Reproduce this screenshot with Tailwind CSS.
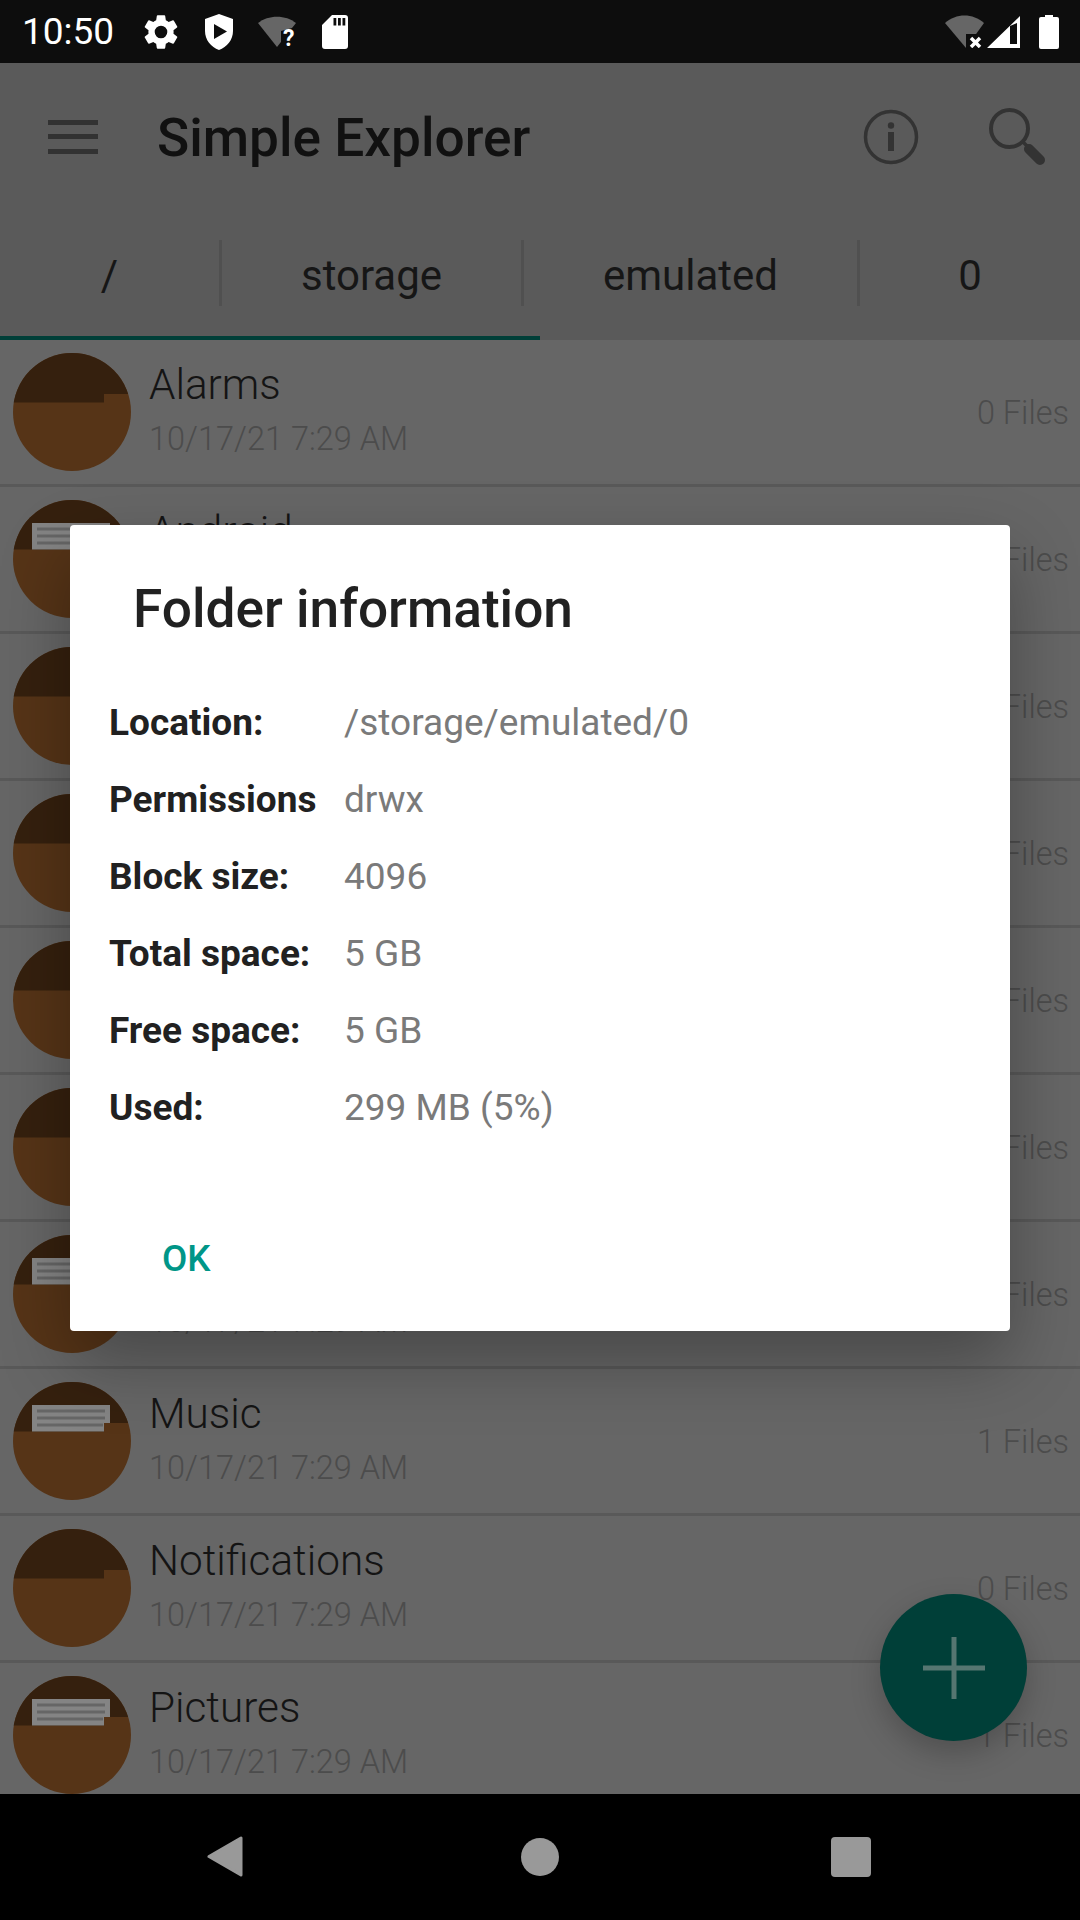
<!DOCTYPE html>
<html lang="en">
<head>
  <meta charset="UTF-8" />
  <meta name="viewport" content="width=device-width, initial-scale=1.0"/>
  <title>Simple Explorer</title>
  <script src="https://cdn.jsdelivr.net/npm/@tailwindcss/browser@4"></script>
</head>
<body class="font-['Roboto',sans-serif] bg-[#666666]">
<div class="relative w-[1080px] h-[1920px] overflow-hidden flex flex-col">

  <!-- status bar -->
  <div class="h-[63px] shrink-0 bg-[#0d0d0d] flex items-center pl-[22px] pr-[21px] text-white">
    <span class="text-[37px] leading-none w-[118px]">10:50</span>
    <svg width="42" height="42" viewBox="0 0 24 24" fill="#fff"><path d="M19.14 12.94c.04-.3.06-.61.06-.94s-.02-.64-.07-.94l2.03-1.58a.5.5 0 0 0 .12-.61l-1.92-3.32a.5.5 0 0 0-.59-.22l-2.39.96a7 7 0 0 0-1.62-.94l-.36-2.54a.48.48 0 0 0-.48-.41h-3.84a.48.48 0 0 0-.47.41l-.36 2.54c-.59.24-1.13.57-1.62.94l-2.39-.96a.49.49 0 0 0-.59.22L2.74 8.87a.48.48 0 0 0 .12.61l2.03 1.58c-.05.3-.09.63-.09.94s.02.64.07.94l-2.03 1.58a.5.5 0 0 0-.12.61l1.92 3.32c.12.22.37.29.59.22l2.39-.96c.5.38 1.03.7 1.62.94l.36 2.54c.05.24.24.41.48.41h3.84c.24 0 .44-.17.47-.41l.36-2.54c.59-.24 1.13-.56 1.62-.94l2.39.96c.22.08.47 0 .59-.22l1.92-3.32a.48.48 0 0 0-.12-.61zM12 15.6a3.6 3.6 0 1 1 0-7.2 3.6 3.6 0 0 1 0 7.2z"/></svg>
    <svg class="ml-[22px]" width="30" height="36" viewBox="0 0 30 36" fill="#fff"><path fill-rule="evenodd" d="M15 0 L29 5 V17 C29 26 23 33 15 36 C7 33 1 26 1 17 V5 Z M10 10 V25 L23 17.500 Z"/></svg>
    <svg class="ml-[24px]" width="38" height="31" viewBox="0 0 38 31"><path d="M0 7 C10 -1.500 28 -1.500 38 7 L19 31 Z" fill="#666"/><path d="M23 31 V15 L38 11 V31 Z" fill="#0d0d0d"/><text x="25" y="30" font-size="23" font-weight="700" fill="#fff" font-family="Roboto">?</text></svg>
    <svg class="ml-[26px]" width="26" height="34" viewBox="0 0 26 34" fill="#fff"><path fill-rule="evenodd" d="M10 0 H23 a3 3 0 0 1 3 3 V31 a3 3 0 0 1-3 3 H3 a3 3 0 0 1-3-3 V10 Z M11.500 3 V10.500 H14.300 V3 Z M16 3 V10.500 H18.800 V3 Z M20.500 3 V10.500 H23.300 V3 Z"/></svg>
    <svg class="ml-auto" width="39" height="33" viewBox="0 0 39 33"><path d="M0 8 C11 -2 28 -2 39 8 L21 33 Z" fill="#666"/><path d="M21 19 H39 V33 H21 Z" fill="#0d0d0d"/><path d="M26 23 L35 32 M35 23 L26 32" stroke="#fff" stroke-width="3.500"/></svg>
    <svg class="ml-[3px]" width="33" height="32" viewBox="0 0 33 32"><path fill-rule="evenodd" d="M0 32 L33 0 V32 Z M23 10 V28 H30 V7 Z" fill="#fff"/></svg>
    <svg class="ml-[19px]" width="20" height="34" viewBox="0 0 20 34" fill="#fff"><path d="M6 0 H14 V2 H18 a2 2 0 0 1 2 2 V32 a2 2 0 0 1-2 2 H2 a2 2 0 0 1-2-2 V4 a2 2 0 0 1 2-2 H6 Z"/></svg>
  </div>

  <!-- app bar -->
  <div class="h-[147px] shrink-0 bg-[#5a5a5a] flex items-center">
    <div class="ml-[48px] w-[50px] flex flex-col gap-[9.500px]">
      <div class="h-[5px] bg-[#323232]"></div>
      <div class="h-[5px] bg-[#323232]"></div>
      <div class="h-[5px] bg-[#323232]"></div>
    </div>
    <h1 class="ml-[59px] mt-[5px] text-[53.200px] leading-none font-medium text-[#111111]">Simple Explorer</h1>
    <svg class="ml-auto" width="56" height="56" viewBox="0 0 56 56"><circle cx="28" cy="28" r="25.500" fill="none" stroke="#333" stroke-width="3.500"/><circle cx="28" cy="16.500" r="3.200" fill="#333"/><rect x="25" y="23" width="6" height="19" fill="#333"/></svg>
    <svg class="ml-[70.500px] mr-[34px]" width="57" height="58" viewBox="0 0 57 58"><circle cx="20.500" cy="20.500" r="18.500" fill="none" stroke="#333" stroke-width="4"/><path d="M34 34 L39 39" stroke="#333" stroke-width="3.500"/><path d="M40 41 L51 52" stroke="#333" stroke-width="10" stroke-linecap="round"/></svg>
  </div>

  <!-- breadcrumb tabs -->
  <div class="relative h-[130px] shrink-0 bg-[#5a5a5a]">
    <div class="h-[126px] flex items-center text-[42px] leading-none text-[#161616]">
      <div class="w-[219px] pt-[5px] text-center">/</div>
      <div class="w-[3px] h-[66px] bg-[#505050]"></div>
      <div class="w-[299px] pt-[5px] text-center">storage</div>
      <div class="w-[3px] h-[66px] bg-[#505050]"></div>
      <div class="w-[333px] pt-[5px] text-center">emulated</div>
      <div class="w-[3px] h-[66px] bg-[#505050]"></div>
      <div class="flex-1 pt-[5px] text-center">0</div>
    </div>
    <div class="absolute left-0 bottom-0 w-[540px] h-[4px] bg-[#003f38]"></div>
  </div>

  <!-- list -->
  <div class="flex-1 bg-[#666666] overflow-hidden">
    <div class="h-[147px] flex items-center border-b-[3px] border-[#595959] pl-[13px] pr-[11px]">
      <svg width="118" height="118" viewBox="0 0 118 118"><defs><clipPath id="c1"><circle cx="59" cy="59" r="59"/></clipPath></defs><g clip-path="url(#c1)"><rect width="118" height="118" fill="#563417"/><path d="M0 0 H118 V41 H91 V49.500 H0 Z" fill="#35200e"/></g></svg>
      <div class="ml-[18px] pb-[6px] flex-1"><div class="text-[42.300px] leading-[46px] font-light text-[#141414]">Alarms</div><div class="text-[32.500px] leading-[36px] mt-[13px] font-light text-[#4c4c4c]">10/17/21 7:29 AM</div></div>
      <div class="pt-[2px] text-[32.500px] font-light text-[#4c4c4c]">0 Files</div>
    </div>
    <div class="h-[147px] flex items-center border-b-[3px] border-[#595959] pl-[13px] pr-[11px]">
      <svg width="118" height="118" viewBox="0 0 118 118"><defs><clipPath id="c2"><circle cx="59" cy="59" r="59"/></clipPath></defs><g clip-path="url(#c2)"><rect width="118" height="118" fill="#563417"/><path d="M0 0 H118 V41 H91 V49.500 H0 Z" fill="#35200e"/><path d="M19 23 H97 V41 H91 V49.500 H19 Z" fill="#848484"/><path d="M24 29 H92 M24 36 H92 M24 43 H90" stroke="#666" stroke-width="3"/></g></svg>
      <div class="ml-[18px] pb-[6px] flex-1"><div class="text-[42.300px] leading-[46px] font-light text-[#141414]">Android</div><div class="text-[32.500px] leading-[36px] mt-[13px] font-light text-[#4c4c4c]">10/17/21 7:29 AM</div></div>
      <div class="pt-[2px] text-[32.500px] font-light text-[#4c4c4c]">1 Files</div>
    </div>
    <div class="h-[147px] flex items-center border-b-[3px] border-[#595959] pl-[13px] pr-[11px]">
      <svg width="118" height="118" viewBox="0 0 118 118"><defs><clipPath id="c3"><circle cx="59" cy="59" r="59"/></clipPath></defs><g clip-path="url(#c3)"><rect width="118" height="118" fill="#563417"/><path d="M0 0 H118 V41 H91 V49.500 H0 Z" fill="#35200e"/></g></svg>
      <div class="ml-[18px] pb-[6px] flex-1"><div class="text-[42.300px] leading-[46px] font-light text-[#141414]">DCIM</div><div class="text-[32.500px] leading-[36px] mt-[13px] font-light text-[#4c4c4c]">10/17/21 7:29 AM</div></div>
      <div class="pt-[2px] text-[32.500px] font-light text-[#4c4c4c]">0 Files</div>
    </div>
    <div class="h-[147px] flex items-center border-b-[3px] border-[#595959] pl-[13px] pr-[11px]">
      <svg width="118" height="118" viewBox="0 0 118 118"><defs><clipPath id="c4"><circle cx="59" cy="59" r="59"/></clipPath></defs><g clip-path="url(#c4)"><rect width="118" height="118" fill="#563417"/><path d="M0 0 H118 V41 H91 V49.500 H0 Z" fill="#35200e"/></g></svg>
      <div class="ml-[18px] pb-[6px] flex-1"><div class="text-[42.300px] leading-[46px] font-light text-[#141414]">Download</div><div class="text-[32.500px] leading-[36px] mt-[13px] font-light text-[#4c4c4c]">10/17/21 7:29 AM</div></div>
      <div class="pt-[2px] text-[32.500px] font-light text-[#4c4c4c]">0 Files</div>
    </div>
    <div class="h-[147px] flex items-center border-b-[3px] border-[#595959] pl-[13px] pr-[11px]">
      <svg width="118" height="118" viewBox="0 0 118 118"><defs><clipPath id="c5"><circle cx="59" cy="59" r="59"/></clipPath></defs><g clip-path="url(#c5)"><rect width="118" height="118" fill="#563417"/><path d="M0 0 H118 V41 H91 V49.500 H0 Z" fill="#35200e"/></g></svg>
      <div class="ml-[18px] pb-[6px] flex-1"><div class="text-[42.300px] leading-[46px] font-light text-[#141414]">Fonts</div><div class="text-[32.500px] leading-[36px] mt-[13px] font-light text-[#4c4c4c]">10/17/21 7:29 AM</div></div>
      <div class="pt-[2px] text-[32.500px] font-light text-[#4c4c4c]">0 Files</div>
    </div>
    <div class="h-[147px] flex items-center border-b-[3px] border-[#595959] pl-[13px] pr-[11px]">
      <svg width="118" height="118" viewBox="0 0 118 118"><defs><clipPath id="c6"><circle cx="59" cy="59" r="59"/></clipPath></defs><g clip-path="url(#c6)"><rect width="118" height="118" fill="#563417"/><path d="M0 0 H118 V41 H91 V49.500 H0 Z" fill="#35200e"/></g></svg>
      <div class="ml-[18px] pb-[6px] flex-1"><div class="text-[42.300px] leading-[46px] font-light text-[#141414]">Movies</div><div class="text-[32.500px] leading-[36px] mt-[13px] font-light text-[#4c4c4c]">10/17/21 7:29 AM</div></div>
      <div class="pt-[2px] text-[32.500px] font-light text-[#4c4c4c]">0 Files</div>
    </div>
    <div class="h-[147px] flex items-center border-b-[3px] border-[#595959] pl-[13px] pr-[11px]">
      <svg width="118" height="118" viewBox="0 0 118 118"><defs><clipPath id="c7"><circle cx="59" cy="59" r="59"/></clipPath></defs><g clip-path="url(#c7)"><rect width="118" height="118" fill="#563417"/><path d="M0 0 H118 V41 H91 V49.500 H0 Z" fill="#35200e"/><path d="M19 23 H97 V41 H91 V49.500 H19 Z" fill="#848484"/><path d="M24 29 H92 M24 36 H92 M24 43 H90" stroke="#666" stroke-width="3"/></g></svg>
      <div class="ml-[18px] pb-[6px] flex-1"><div class="text-[42.300px] leading-[46px] font-light text-[#141414]">Documents</div><div class="text-[32.500px] leading-[36px] mt-[13px] font-light text-[#4c4c4c]">10/17/21 7:29 AM</div></div>
      <div class="pt-[2px] text-[32.500px] font-light text-[#4c4c4c]">1 Files</div>
    </div>
    <div class="h-[147px] flex items-center border-b-[3px] border-[#595959] pl-[13px] pr-[11px]">
      <svg width="118" height="118" viewBox="0 0 118 118"><defs><clipPath id="c8"><circle cx="59" cy="59" r="59"/></clipPath></defs><g clip-path="url(#c8)"><rect width="118" height="118" fill="#563417"/><path d="M0 0 H118 V41 H91 V49.500 H0 Z" fill="#35200e"/><path d="M19 23 H97 V41 H91 V49.500 H19 Z" fill="#848484"/><path d="M24 29 H92 M24 36 H92 M24 43 H90" stroke="#666" stroke-width="3"/></g></svg>
      <div class="ml-[18px] pb-[6px] flex-1"><div class="text-[42.300px] leading-[46px] font-light text-[#141414]">Music</div><div class="text-[32.500px] leading-[36px] mt-[13px] font-light text-[#4c4c4c]">10/17/21 7:29 AM</div></div>
      <div class="pt-[2px] text-[32.500px] font-light text-[#4c4c4c]">1 Files</div>
    </div>
    <div class="h-[147px] flex items-center border-b-[3px] border-[#595959] pl-[13px] pr-[11px]">
      <svg width="118" height="118" viewBox="0 0 118 118"><defs><clipPath id="c9"><circle cx="59" cy="59" r="59"/></clipPath></defs><g clip-path="url(#c9)"><rect width="118" height="118" fill="#563417"/><path d="M0 0 H118 V41 H91 V49.500 H0 Z" fill="#35200e"/></g></svg>
      <div class="ml-[18px] pb-[6px] flex-1"><div class="text-[42.300px] leading-[46px] font-light text-[#141414]">Notifications</div><div class="text-[32.500px] leading-[36px] mt-[13px] font-light text-[#4c4c4c]">10/17/21 7:29 AM</div></div>
      <div class="pt-[2px] text-[32.500px] font-light text-[#4c4c4c]">0 Files</div>
    </div>
    <div class="h-[147px] flex items-center border-b-[3px] border-[#595959] pl-[13px] pr-[11px]">
      <svg width="118" height="118" viewBox="0 0 118 118"><defs><clipPath id="c10"><circle cx="59" cy="59" r="59"/></clipPath></defs><g clip-path="url(#c10)"><rect width="118" height="118" fill="#563417"/><path d="M0 0 H118 V41 H91 V49.500 H0 Z" fill="#35200e"/><path d="M19 23 H97 V41 H91 V49.500 H19 Z" fill="#848484"/><path d="M24 29 H92 M24 36 H92 M24 43 H90" stroke="#666" stroke-width="3"/></g></svg>
      <div class="ml-[18px] pb-[6px] flex-1"><div class="text-[42.300px] leading-[46px] font-light text-[#141414]">Pictures</div><div class="text-[32.500px] leading-[36px] mt-[13px] font-light text-[#4c4c4c]">10/17/21 7:29 AM</div></div>
      <div class="pt-[2px] text-[32.500px] font-light text-[#4c4c4c]">1 Files</div>
    </div>
  </div>

  <!-- nav bar -->
  <div class="h-[126px] shrink-0 bg-black relative">
    <svg class="absolute left-[207px] top-[42px]" width="36" height="41" viewBox="0 0 36 41"><path d="M2 20.500 L34 2 V39 Z" fill="#999" stroke="#999" stroke-width="3" stroke-linejoin="round"/></svg>
    <div class="absolute left-[521px] top-[44px] w-[38px] h-[38px] rounded-full bg-[#999999]"></div>
    <div class="absolute left-[831px] top-[43px] w-[40px] h-[40px] rounded-[4px] bg-[#999999]"></div>
  </div>

  <!-- fab -->
  <div class="absolute left-[880px] top-[1594px] w-[147px] h-[147px] rounded-full bg-[#003f38] flex items-center justify-center shadow-[0_12px_30px_rgba(0,0,0,0.22)]">
    <svg width="62" height="62" viewBox="0 0 62 62"><path d="M31 0 V62 M0 31 H62" stroke="#567671" stroke-width="5"/></svg>
  </div>

  <!-- dialog -->
  <div class="absolute left-[70px] top-[525px] w-[940px] h-[806px] bg-white rounded-[4px] shadow-[0_30px_70px_rgba(0,0,0,0.3)] flex flex-col">
    <h2 class="ml-[63px] mt-[51px] text-[53.200px] leading-[66px] font-medium text-[#212121]">Folder information</h2>
    <div class="ml-[39px] mt-[59px] flex flex-col text-[37px] leading-[43px] gap-[34px]">
      <div class="flex"><span class="w-[235px] font-bold text-[#212121]">Location:</span><span class="text-[#7a7a7a]">/storage/emulated/0</span></div>
      <div class="flex"><span class="w-[235px] font-bold text-[#212121]">Permissions</span><span class="text-[#7a7a7a]">drwx</span></div>
      <div class="flex"><span class="w-[235px] font-bold text-[#212121]">Block size:</span><span class="text-[#7a7a7a]">4096</span></div>
      <div class="flex"><span class="w-[235px] font-bold text-[#212121]">Total space:</span><span class="text-[#7a7a7a]">5 GB</span></div>
      <div class="flex"><span class="w-[235px] font-bold text-[#212121]">Free space:</span><span class="text-[#7a7a7a]">5 GB</span></div>
      <div class="flex"><span class="w-[235px] font-bold text-[#212121]">Used:</span><span class="text-[#7a7a7a]">299 MB (5%)</span></div>
    </div>
    <div class="ml-[92px] mt-auto mb-[53px] text-[36.750px] leading-none font-medium text-[#009688]">OK</div>
  </div>
</div>
</body>
</html>
